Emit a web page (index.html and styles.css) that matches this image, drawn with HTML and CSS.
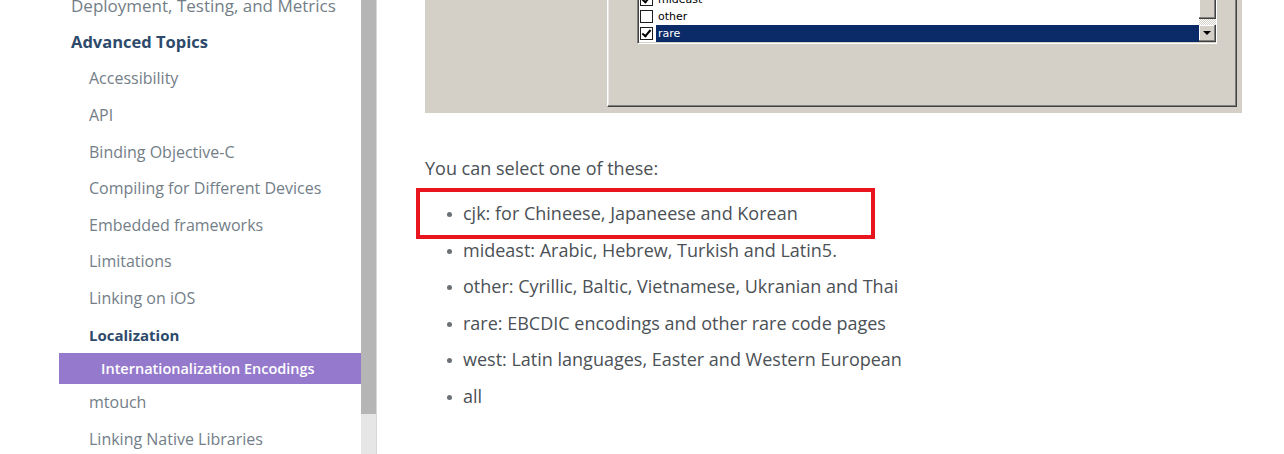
FILE: index.html
```html
<!DOCTYPE html>
<html>
<head>
<meta charset="utf-8">
<link rel="stylesheet" href="styles.css">
</head>
<body>
<div class="page">
  <nav class="sidebar">
    <ul class="nav">
      <li class="nav-item top">Deployment, Testing, and Metrics</li>
      <li class="nav-item top heading">Advanced Topics</li>
      <li class="nav-item sub">Accessibility</li>
      <li class="nav-item sub">API</li>
      <li class="nav-item sub">Binding Objective-C</li>
      <li class="nav-item sub">Compiling for Different Devices</li>
      <li class="nav-item sub">Embedded frameworks</li>
      <li class="nav-item sub">Limitations</li>
      <li class="nav-item sub">Linking on iOS</li>
      <li class="nav-item sub heading">Localization</li>
      <li class="nav-item active">Internationalization Encodings</li>
      <li class="nav-item sub">mtouch</li>
      <li class="nav-item sub">Linking Native Libraries</li>
    </ul>
  </nav>
  <div class="scrollbar"><div class="thumb"></div><div class="track"></div></div>
  <main class="content">
    <div class="shot">
      <div class="dialog">
        <div class="listbox">
          <div class="lb-items">
            <div class="lb-row"><span class="cb checked"></span><span class="lb-text">mideast</span></div>
            <div class="lb-row"><span class="cb"></span><span class="lb-text">other</span></div>
            <div class="lb-row selected"><span class="cb checked"></span><span class="lb-text">rare</span></div>
          </div>
          <div class="lb-scroll">
            <div class="sb-thumb"></div>
            <div class="sb-gap"></div>
            <div class="sb-btn"><span class="arrow"></span></div>
          </div>
        </div>
      </div>
    </div>
    <p class="lead">You can select one of these:</p>
    <ul class="options">
      <li class="opt">cjk: for Chineese, Japaneese and Korean</li>
      <li class="opt">mideast: Arabic, Hebrew, Turkish and Latin5.</li>
      <li class="opt">other: Cyrillic, Baltic, Vietnamese, Ukranian and Thai</li>
      <li class="opt">rare: EBCDIC encodings and other rare code pages</li>
      <li class="opt">west: Latin languages, Easter and Western European</li>
      <li class="opt">all</li>
      <li class="callout"></li>
    </ul>
  </main>
</div>
</body>
</html>
```

FILE: styles.css
```css
* { box-sizing: border-box; }
html, body { margin: 0; padding: 0; background: #fff; }
body { width: 1284px; height: 454px; overflow: hidden; font-family: "Open Sans", "Noto Sans", sans-serif; }

.page { display: flex; height: 454px; }

.sidebar { width: 361px; flex: none; overflow: hidden; }
.nav { list-style: none; margin: -13px 0 0 0; padding: 0; }
.nav-item { height: 36.6px; display: flex; align-items: center; font-size: 16px; color: #737e88; white-space: nowrap; }
.nav-item.top { padding-left: 71px; font-size: 17px; }
.nav-item.sub { padding-left: 89px; }
.nav-item.heading { color: #2e4a6b; font-weight: 700; font-size: 15px; }
.nav-item.top.heading { font-size: 16.5px; }
.nav-item.active { height: 31px; margin-left: 59px; padding-left: 42px; background: #9479cc; color: #fff; font-weight: 600; font-size: 14.5px; }

.scrollbar { width: 16px; flex: none; display: flex; flex-direction: column; border-right: 1px solid #d6d6d6; }
.thumb { height: 414px; background: #b5b5b5; }
.track { flex: 1; background: #e6e6e6; }

.content { flex: 1; padding-left: 48px; }

.shot { width: 817px; height: 113px; background: #d4d0c8; padding-left: 182px; font-family: Tahoma, "DejaVu Sans", sans-serif; }
.dialog { width: 630px; height: 107px; border-left: 1px solid #fff; border-right: 1px solid #404040; border-bottom: 1px solid #404040; box-shadow: inset -1px -1px 0 #808080, inset 1px 0 0 #e8e6e2; padding-left: 29px; }
.listbox { width: 580px; height: 44px; display: flex; background: #fff; border-left: 1px solid #808080; border-bottom: 1px solid #fff; border-right: 1px solid #fff; box-shadow: inset 1px 0 0 #404040, inset 0 -1px 0 #d4d0c8; padding-left: 2px; padding-bottom: 1px; }
.lb-items { flex: 1; display: flex; flex-direction: column; justify-content: flex-end; overflow: hidden; }
.lb-row { height: 17px; flex: none; display: flex; align-items: center; font-size: 11px; color: #000; }
.lb-row .cb { width: 13px; height: 13px; border: 1px solid #1c1c1c; background: #fff; flex: none; margin-right: 3px; position: relative; }
.lb-row .cb.checked::after { content: ""; position: absolute; left: 3px; top: 0px; width: 3px; height: 7px; border-right: 2px solid #000; border-bottom: 2px solid #000; transform: rotate(40deg); }
.lb-text { height: 17px; line-height: 17px; padding-left: 2px; flex: 1; }
.lb-row.selected .lb-text { background: #0a2a68; color: #fff; }

.lb-scroll { width: 17px; flex: none; display: flex; flex-direction: column; justify-content: flex-end; }
.sb-thumb { height: 19px; background: #d4d0c8; border-right: 1px solid #404040; border-bottom: 1px solid #404040; box-shadow: inset -1px -1px 0 #808080, inset 1px 0 0 #fff; }
.sb-gap { height: 7px; background-color: #eceae6; background-image: repeating-conic-gradient(#d4d0c8 0 25%, #fff 0 50%); background-size: 2px 2px; }
.sb-btn { height: 17px; background: #d4d0c8; border-right: 1px solid #404040; border-bottom: 1px solid #404040; box-shadow: inset -1px -1px 0 #808080, inset 1px 1px 0 #fff; display: flex; align-items: center; justify-content: center; }
.arrow { width: 0; height: 0; border-left: 4px solid transparent; border-right: 4px solid transparent; border-top: 4px solid #000; }

.lead { margin: 43px 0 0 0; font-size: 18px; color: #4b5156; line-height: 24px; }
.options { list-style: none; margin: 15px 0 0 0; padding: 0; position: relative; }
.opt { height: 36.5px; display: flex; align-items: center; padding-left: 38px; font-size: 18px; color: #4b5156; position: relative; }
.opt::before { content: ""; position: absolute; left: 22px; top: 50%; width: 5px; height: 5px; margin-top: -1px; border-radius: 50%; background: #6b7075; }
.callout { position: absolute; left: -9px; top: -7px; width: 459px; height: 51px; border: 4px solid #e8141e; }
```
